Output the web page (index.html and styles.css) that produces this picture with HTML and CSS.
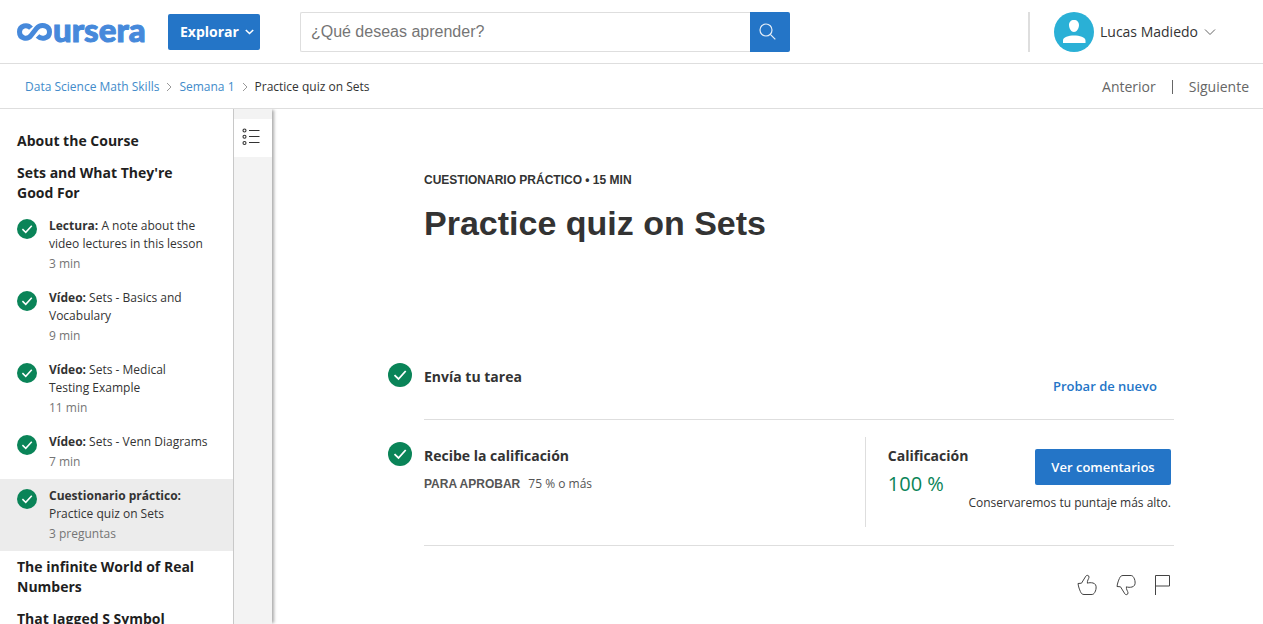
FILE: index.html
```html
<!DOCTYPE html>
<html lang="es">
<head>
<meta charset="utf-8">
<meta name="viewport" content="width=device-width, initial-scale=1">
<title>Practice quiz on Sets | Coursera</title>
<link rel="stylesheet" href="styles.css">
</head>
<body>
<svg class="sprite" aria-hidden="true">
  <symbol id="check" viewBox="0 0 24 24">
    <circle cx="12" cy="12" r="12" fill="#0a8458"/>
    <path d="M6.500 12.200l4 3.800 7.200-8" fill="none" stroke="#fff" stroke-width="1.800"/>
  </symbol>
</svg>

<header class="topbar">
  <a class="logo" href="#" aria-label="coursera">
    <svg class="logo-mark" viewBox="0 0 37 20" aria-hidden="true">
      <path d="M15 6.200C11.500 2 3.500 3.300 3.500 10s8 8.200 11.500 3.600L20.500 6.500C24.500 1.500 33.500 3 33.500 10S25 17.500 21.500 14" fill="none" stroke="#4689db" stroke-width="5"/>
    </svg>
    <span class="logo-text">ursera</span>
  </a>
  <button class="explore" type="button">Explorar
    <svg width="9" height="6" viewBox="0 0 9 6" aria-hidden="true"><path d="M.8 1l3.700 3.500L8.200 1" fill="none" stroke="#fff" stroke-width="1.600"/></svg>
  </button>
  <form class="search">
    <input type="text" aria-label="Buscar" placeholder="¿Qué deseas aprender?">
    <button type="button" aria-label="Buscar">
      <svg width="18" height="18" viewBox="0 0 18 18" aria-hidden="true"><g fill="none" stroke="#e4edf7" stroke-width="1.200"><circle cx="7" cy="7" r="6"/><path d="M11.300 11.300l5 5"/></g></svg>
    </button>
  </form>
  <button class="account" type="button">
    <svg class="avatar" viewBox="0 0 40 40" aria-hidden="true">
      <circle cx="20" cy="20" r="20" fill="#2ab0d6"/>
      <path d="M20 8c3.200 0 5 2.100 5 5 0 3.400-2.200 7-5 7s-5-3.600-5-7c0-2.900 1.800-5 5-5zM9 31v-2.500c0-3.500 5.500-5 11-5s11.500 1.500 11.500 5V31z" fill="#fff"/>
    </svg>
    <span>Lucas Madiedo</span>
    <svg width="12" height="8" viewBox="0 0 12 8" aria-hidden="true"><path d="M1 1.500l5 5 5-5" fill="none" stroke="#666" stroke-width="1"/></svg>
  </button>
</header>

<div class="subbar">
  <nav class="crumbs" aria-label="Ruta">
    <a href="#">Data Science Math Skills</a>
    <svg width="6" height="10" viewBox="0 0 6 10" aria-hidden="true"><path d="M1 1l4 4-4 4" fill="none" stroke="#999"/></svg>
    <a href="#">Semana 1</a>
    <svg width="6" height="10" viewBox="0 0 6 10" aria-hidden="true"><path d="M1 1l4 4-4 4" fill="none" stroke="#999"/></svg>
    <span>Practice quiz on Sets</span>
  </nav>
  <nav class="pager" aria-label="Lecciones">
    <a href="#">Anterior</a>
    <a href="#">Siguiente</a>
  </nav>
</div>

<div class="layout">
  <nav class="sidebar" aria-label="Contenido">
    <h2>About the Course</h2>
    <h2>Sets and What They're Good For</h2>
    <a class="item" href="#"><svg><use href="#check"/></svg><span><strong>Lectura:</strong> A note about the video lectures in this lesson<small>3 min</small></span></a>
    <a class="item" href="#"><svg><use href="#check"/></svg><span><strong>Vídeo:</strong> Sets - Basics and Vocabulary<small>9 min</small></span></a>
    <a class="item" href="#"><svg><use href="#check"/></svg><span><strong>Vídeo:</strong> Sets - Medical Testing Example<small>11 min</small></span></a>
    <a class="item" href="#"><svg><use href="#check"/></svg><span><strong>Vídeo:</strong> Sets - Venn Diagrams<small>7 min</small></span></a>
    <a class="item current" href="#" aria-current="page"><svg><use href="#check"/></svg><span><strong>Cuestionario práctico:</strong> Practice quiz on Sets<small>3 preguntas</small></span></a>
    <h2>The infinite World of Real Numbers</h2>
    <h2>That Jagged S Symbol</h2>
  </nav>
  <div class="rail">
    <button type="button" aria-label="Mostrar lista">
      <svg width="18" height="18" viewBox="0 0 18 18" aria-hidden="true"><g fill="none" stroke="#333" stroke-width="1.100"><circle cx="2.500" cy="2.500" r="1.500"/><circle cx="2.500" cy="8.700" r="1.500"/><circle cx="2.500" cy="15" r="1.500"/><path d="M7 2.500h10.500M7 8.500h10.500M7 14.500h10.500"/></g></svg>
    </button>
  </div>

  <main class="content">
    <p class="eyebrow">CUESTIONARIO PRÁCTICO • 15 MIN</p>
    <h1>Practice quiz on Sets</h1>

    <section class="step">
      <svg class="step-icon"><use href="#check"/></svg>
      <div class="step-body submit">
        <h3>Envía tu tarea</h3>
        <button class="retry" type="button">Probar de nuevo</button>
      </div>
    </section>

    <section class="step">
      <svg class="step-icon"><use href="#check"/></svg>
      <div class="step-body result">
        <div class="pass">
          <h3>Recibe la calificación</h3>
          <p><b>PARA APROBAR</b> <span>75 % o más</span></p>
        </div>
        <div class="grade">
          <div class="score">
            <h3>Calificación</h3>
            <p>100 %</p>
          </div>
          <div class="feedback">
            <button type="button">Ver comentarios</button>
            <p>Conservaremos tu puntaje más alto.</p>
          </div>
        </div>
      </div>
    </section>

    <div class="reactions">
      <button type="button" aria-label="Me gusta">
        <svg width="20" height="22" viewBox="0 0 20 22"><path id="thumb" d="M1 9.500L4.500 9.200 8.800 2.200C9.500.9 12.200 1 12 3.200 11.800 5 10 6.500 10.400 9.200 12 8.600 14 8.500 16 9c2.400.7 3.300 2.300 3.100 5-.2 2.300-.9 4-2.100 5.500-.8.900-1.500 1-3 1H7c-1.800 0-2.800-1-3.600-3C2.500 15.500 1.500 13 1 9.500z"/></svg>
      </button>
      <button type="button" aria-label="No me gusta">
        <svg width="20" height="22" viewBox="0 0 20 22"><use href="#thumb" transform="matrix(1 0 0 -1 0 22)"/></svg>
      </button>
      <button type="button" aria-label="Denunciar">
        <svg width="16" height="22" viewBox="0 0 16 22"><path d="M.5 21V1.500h14v10.500H.5"/></svg>
      </button>
    </div>
  </main>
</div>
</body>
</html>
```
FILE: styles.css
```css
* { box-sizing: border-box; }
body {
  margin: 0;
  height: 100vh;
  display: flex;
  flex-direction: column;
  overflow: hidden;
  background: #fff;
  color: #333;
  font-family: "Open Sans", sans-serif;
  font-size: 14px;
  line-height: 20px;
}
h1, h2, h3, p { margin: 0; }
a { color: inherit; text-decoration: none; }
button { border: 0; padding: 0; background: none; color: inherit; font: inherit; cursor: pointer; }
svg { flex: none; }
.sprite { display: none; }

.topbar {
  flex: none;
  display: flex;
  align-items: center;
  height: 64px;
  padding: 0 47px 0 16px;
  border-bottom: 1px solid #dedede;
}
.logo { display: flex; align-items: center; width: 128px; margin-right: 24px; color: #4689db; }
.logo-mark { width: 37px; height: 20px; }
.logo-text { padding-bottom: 6px; font: 900 33px/40px Lato, sans-serif; -webkit-text-stroke: 1px #4689db; }
.explore {
  display: flex;
  align-items: center;
  gap: 6px;
  height: 36px;
  padding: 0 6px 0 12px;
  border-radius: 2px;
  background: #2475c7;
  color: #fff;
  font-weight: 700;
}
.search { display: flex; flex: 0 1 490px; margin-left: 40px; height: 40px; }
.search input {
  flex: 1;
  min-width: 0;
  padding: 0 10px;
  border: 1px solid #dedede;
  border-right: 0;
  border-radius: 2px 0 0 2px;
  font: 16px "Liberation Sans", Arial, sans-serif;
}
.search input::placeholder { color: #757575; }
.search button {
  display: grid;
  place-items: center;
  width: 40px;
  padding-right: 4px;
  border-radius: 0 2px 2px 0;
  background: #2475c7;
}
.account {
  display: flex;
  align-items: center;
  gap: 6px;
  height: 40px;
  margin-left: auto;
  padding-left: 24px;
  border-left: 2px solid #dedede;
}
.avatar { width: 40px; height: 40px; }

.subbar {
  flex: none;
  display: flex;
  align-items: center;
  justify-content: space-between;
  height: 45px;
  padding: 2px 14px 0 25px;
  border-bottom: 1px solid #dedede;
}
.crumbs { display: flex; align-items: center; gap: 7px; font-size: 12px; }
.crumbs a { color: #428bca; }
.pager { display: flex; align-items: center; color: #666; }
.pager a { line-height: 14px; }
.pager a + a { margin-left: 16px; padding-left: 16px; border-left: 1px solid #666; }

.layout { flex: 1; min-height: 0; display: flex; overflow: hidden; }
.sidebar {
  flex: none;
  width: 234px;
  padding-top: 16px;
  border-right: 1px solid #c8c8c8;
  overflow: auto;
  scrollbar-width: none;
}
.sidebar h2 { padding: 6px 32px 6px 17px; color: #1f1f1f; font-size: 14px; line-height: 20px; }
.item { display: flex; gap: 12px; padding: 8px 24px 7px 17px; font-size: 12px; line-height: 18px; }
.item svg { width: 20px; height: 20px; margin-top: 2px; }
.item small { display: block; margin-top: 1px; color: #757575; font-size: 12px; line-height: 20px; }
.item.current { background: #ececec; }

.rail { flex: none; width: 38px; padding-top: 10px; background: #f3f3f3; box-shadow: 3px 0 3px -1px #aaa; }
.rail button { display: grid; place-items: center; width: 38px; height: 38px; padding: 0 4px 3px 0; background: #fff; }

.content { flex: 1; min-width: 0; padding: 61px 89px 0 116px; overflow: hidden; }
.eyebrow, .pass b { font: 700 12px/20px "Liberation Sans", Arial, sans-serif; }
.eyebrow { margin-left: 36px; }
h1 { margin: 11px 0 0 36px; font: 700 34px/44px "Liberation Sans", Arial, sans-serif; }
h1 + .step { margin-top: 102px; }
h3 { font-size: 14px; line-height: 20px; }
.step { display: flex; gap: 12px; }
.step-icon { width: 24px; height: 24px; margin-top: 16px; }
.step-body { flex: 1; display: flex; justify-content: space-between; border-bottom: 1px solid #dedede; }
.submit { padding: 20px 17px 24px 0; }
.submit .retry { margin-top: 10px; }
.retry, .feedback button { font-size: 13px; font-weight: 600; line-height: 18px; }
.retry { color: #2475c7; }
.step + .step { margin-top: 6px; }
.result { padding: 11px 3px 18px 0; }
.pass { padding-top: 9px; }
.pass p { margin-top: 8px; color: #555; font-size: 12px; }
.pass span { margin-left: 5px; }
.grade { display: flex; height: 90px; padding-left: 22px; border-left: 1px solid #dedede; }
.score { padding-top: 9px; }
.score p { margin-top: 4px; color: #0a8458; font-size: 20px; line-height: 28px; }
.feedback { display: flex; flex-direction: column; align-items: flex-end; padding-top: 12px; }
.feedback button { width: 136px; height: 36px; border-radius: 2px; background: #2475c7; color: #fff; }
.feedback p { margin-top: 8px; font-size: 12px; }
.reactions { display: flex; justify-content: flex-end; gap: 19px; padding: 28px 3px 0 0; }
.reactions svg { display: block; fill: none; stroke: #444; stroke-width: 1; }
```
